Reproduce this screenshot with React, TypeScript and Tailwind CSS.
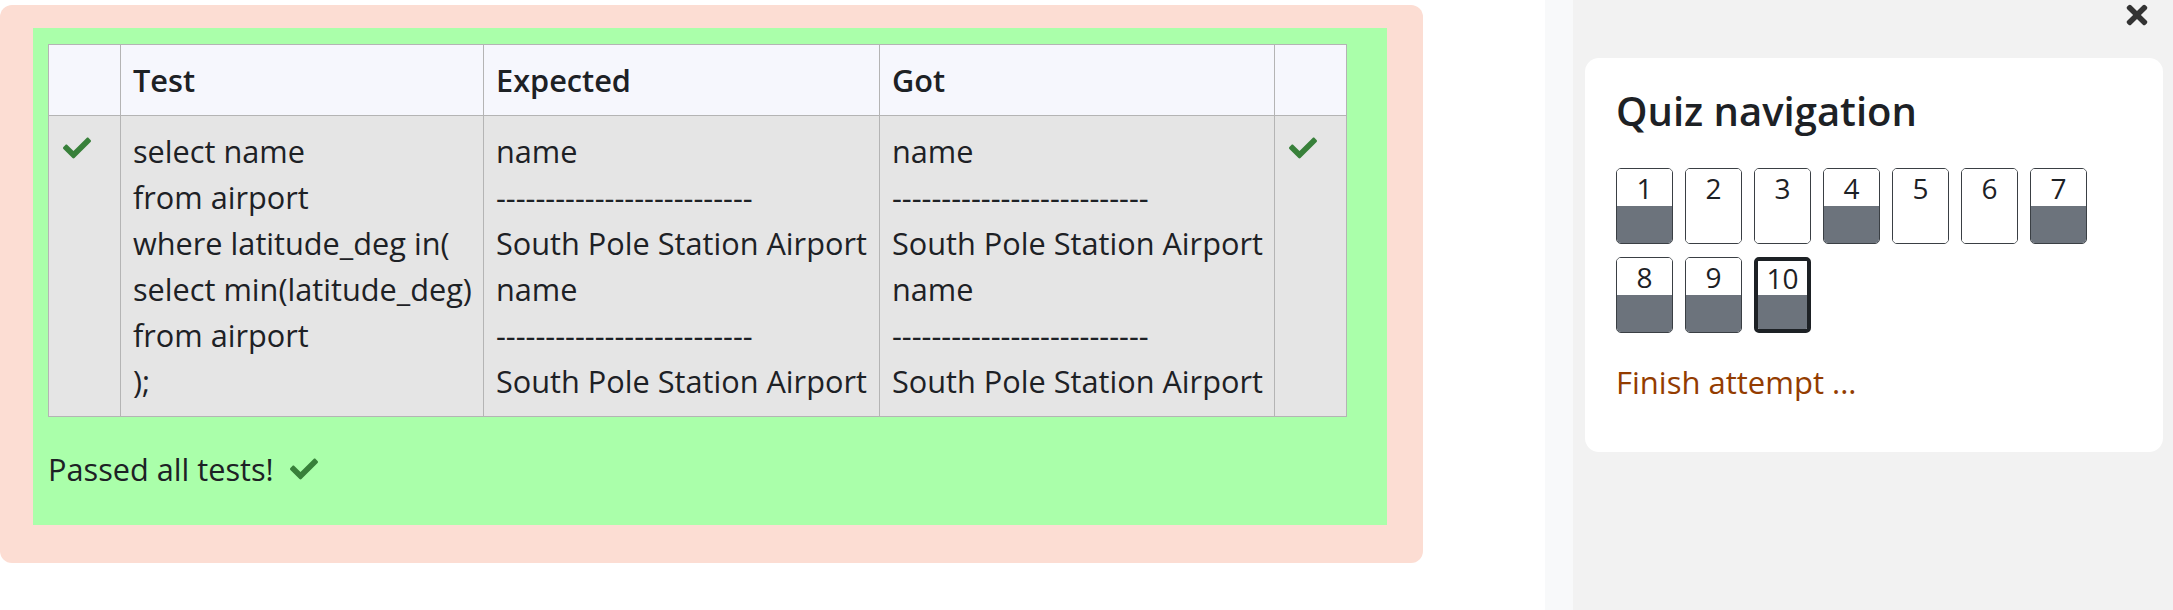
import React from 'react';
import { FaCheck, FaTimes } from 'react-icons/fa';

const testLines = [
  'select name',
  'from airport',
  'where latitude_deg in(',
  'select min(latitude_deg)',
  'from airport',
  ');',
];

const resultLines = [
  'name',
  '--------------------------',
  'South Pole Station Airport',
  'name',
  '--------------------------',
  'South Pole Station Airport',
];

const navItems = [
  { n: 1, saved: true },
  { n: 2, saved: false },
  { n: 3, saved: false },
  { n: 4, saved: true },
  { n: 5, saved: false },
  { n: 6, saved: false },
  { n: 7, saved: true },
  { n: 8, saved: true },
  { n: 9, saved: true },
  { n: 10, saved: true, current: true },
];

const Lines = ({ lines }: { lines: string[] }) => (
  <div className="flex flex-col">
    {lines.map((line, i) => (
      <span key={i} className="whitespace-pre">
        {line}
      </span>
    ))}
  </div>
);

const ResultTable = () => (
  <table className="w-[1298px] table-fixed border-collapse border border-[#b4b4b4] text-[30.7px] leading-[46px] text-[#1d2125]">
    <colgroup>
      <col className="w-[72px]" />
      <col className="w-[363px]" />
      <col className="w-[396px]" />
      <col className="w-[395px]" />
      <col className="w-[72px]" />
    </colgroup>
    <thead>
      <tr className="bg-[#f6f7fd] text-left">
        <th className="border border-[#b4b4b4] px-[12px] py-[12px]" />
        <th className="border border-[#b4b4b4] px-[12px] py-[12px] font-semibold">Test</th>
        <th className="border border-[#b4b4b4] px-[12px] py-[12px] font-semibold">Expected</th>
        <th className="border border-[#b4b4b4] px-[12px] py-[12px] font-semibold">Got</th>
        <th className="border border-[#b4b4b4] px-[12px] py-[12px]" />
      </tr>
    </thead>
    <tbody>
      <tr className="bg-[#e5e5e5] align-top">
        <td className="border border-[#b4b4b4] px-[14px] py-[12px]">
          <FaCheck className="mt-[6px] text-[28px] text-[#38803a]" />
        </td>
        <td className="border border-[#b4b4b4] px-[12px] py-[12px]">
          <Lines lines={testLines} />
        </td>
        <td className="border border-[#b4b4b4] px-[12px] py-[12px]">
          <Lines lines={resultLines} />
        </td>
        <td className="border border-[#b4b4b4] px-[12px] py-[12px]">
          <Lines lines={resultLines} />
        </td>
        <td className="border border-[#b4b4b4] px-[14px] py-[12px]">
          <FaCheck className="mt-[6px] text-[28px] text-[#38803a]" />
        </td>
      </tr>
    </tbody>
  </table>
);

const NavButton = ({ n, saved, current }: { n: number; saved: boolean; current?: boolean }) => (
  <div
    className={`flex h-[76px] w-[57px] flex-col overflow-hidden rounded-[5px] ${
      current ? 'border-[4px] border-[#1d2125]' : 'border border-[#3a3f44]'
    }`}
  >
    <div className="flex flex-1 items-center justify-center bg-white text-[28px] leading-none text-[#1d2125]">
      {n}
    </div>
    <div className={`flex-1 ${saved ? 'bg-[#6c737c]' : 'bg-white'}`} />
  </div>
);

const QuizNav = () => (
  <div className="ml-[12px] mr-[10px] mt-[28px] rounded-[14px] bg-white px-[31px] pb-[47px] pt-[29px]">
    <div className="text-[40px] font-semibold leading-[48px] text-[#1d2125]">Quiz navigation</div>
    <div className="mt-[33px] grid w-[470px] grid-cols-[repeat(7,57px)] gap-x-[12px] gap-y-[13px]">
      {navItems.map(item => (
        <NavButton key={item.n} n={item.n} saved={item.saved} current={item.current} />
      ))}
    </div>
    <div className="mt-[26px] text-[31px] leading-[46px] text-[#933c00]">Finish attempt ...</div>
  </div>
);

const App = () => (
  <div className="flex h-[610px] w-[2173px] overflow-hidden bg-white font-['Open_Sans',sans-serif]">
    <div className="w-[1545px] shrink-0 pt-[5px]">
      <div className="w-[1423px] rounded-[12px] bg-[#fcddd3] pb-[38px] pl-[33px] pr-[36px] pt-[23px]">
        <div className="bg-[#aaffaa] pb-[33px] pl-[15px] pt-[16px]">
          <ResultTable />
          <div className="mt-[29px] flex items-center text-[30.7px] leading-[46px] text-[#1d2125]">
            <span>Passed all tests!</span>
            <FaCheck className="ml-[16px] text-[28px] text-[#38803a]" />
          </div>
        </div>
      </div>
    </div>
    <div className="w-[28px] shrink-0 bg-[#f8f9fa]" />
    <div className="flex flex-1 flex-col bg-[#f2f2f2]">
      <div className="flex h-[30px] justify-end pr-[21px]">
        <FaTimes className="text-[30px] text-[#333333]" />
      </div>
      <QuizNav />
    </div>
  </div>
);

export default App;
